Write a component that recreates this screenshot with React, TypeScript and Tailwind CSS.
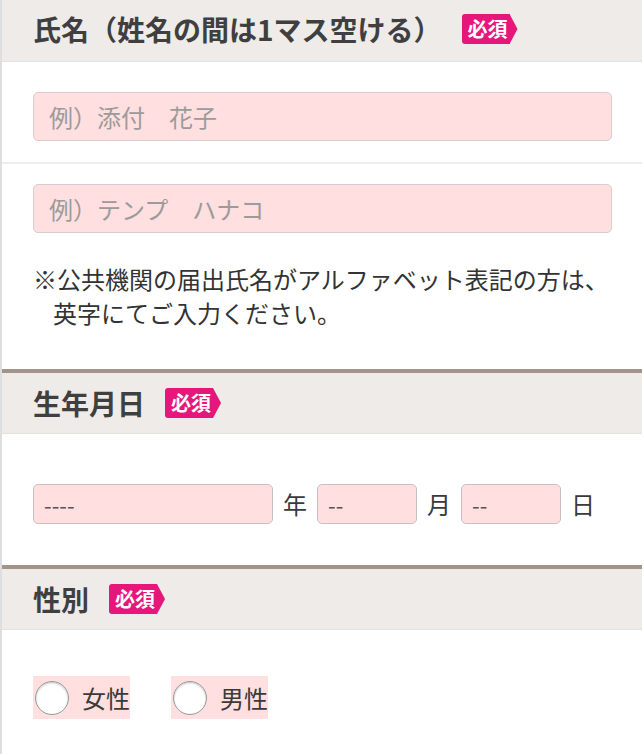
const font = { fontFamily: '"Noto Sans CJK JP", "Noto Sans", sans-serif' };

function Badge() {
  return (
    <span className="ml-[20px] flex items-center">
      <span className="flex h-[30px] items-center rounded-l-[3px] bg-[#e5177b] pl-[6px] pr-[2px] text-[20px] leading-none font-bold text-white">
        必須
      </span>
      <span className="h-[30px] w-[8px] bg-[#e5177b] [clip-path:polygon(0_0,100%_50%,0_100%)]" />
    </span>
  );
}

function Header({ title, first }: { title: string; first?: boolean }) {
  return (
    <div
      className={
        "flex items-center border-b border-[#e4e1de] bg-[#eeebe8] pl-[31px] " +
        (first ? "h-[62px] pb-[3px]" : "h-[65px] border-t-4 border-t-[#a39389]")
      }
    >
      <h2 className="text-[28px] leading-none font-bold text-[#3f3f3f]">{title}</h2>
      <Badge />
    </div>
  );
}

function TextInput({ placeholder }: { placeholder: string }) {
  return (
    <input
      type="text"
      placeholder={placeholder}
      className="h-[49px] w-[579px] rounded-[5px] border border-[#d9cccc] bg-[#ffdfe0] px-[15px] text-[24px] text-[#333] outline-none placeholder:text-[#9b9b9b]"
    />
  );
}

function SmallInput({ width, value }: { width: string; value: string }) {
  return (
    <div
      className={
        "flex h-[40px] shrink-0 items-center rounded-[5px] border border-[#c9c0c0] bg-[#ffdfe0] pl-[10px] text-[22px] text-[#555] " +
        width
      }
    >
      {value}
    </div>
  );
}

function Radio({ label }: { label: string }) {
  return (
    <label className="flex h-[43px] w-[97px] shrink-0 items-center bg-[#ffdfe0] pl-[2px] whitespace-nowrap">
      <span className="h-[34px] w-[34px] shrink-0 rounded-full border border-[#9a9a9a] bg-white shadow-[inset_0_1px_2px_rgba(0,0,0,0.25)]" />
      <span className="ml-[13px] text-[24px] leading-none text-[#3a3a3a]">{label}</span>
    </label>
  );
}

export default function App() {
  return (
    <div className="h-[754px] w-[644px] overflow-hidden bg-white" style={font}>
      <div className="h-full w-[642px] border-l-2 border-[#dedede]">
        {/* 氏名 */}
        <Header title="氏名（姓名の間は1マス空ける）" first />
        <div className="pt-[30px] pb-[21px] pl-[31px]">
          <TextInput placeholder="例）添付　花子" />
        </div>
        <div className="h-[2px] bg-[#eeeeee]" />
        <div className="pt-[20px] pb-[39px] pl-[31px]">
          <TextInput placeholder="例）テンプ　ハナコ" />
          <p className="mt-[29px] text-[24px] leading-[34px] text-[#333]">
            ※公共機関の届出氏名がアルファベット表記の方は、
          </p>
          <p className="pl-[20px] text-[24px] leading-[34px] text-[#333]">英字にてご入力ください。</p>
        </div>

        {/* 生年月日 */}
        <Header title="生年月日" />
        <div className="flex items-center gap-[10px] pt-[50px] pb-[41px] pl-[31px] text-[24px] text-[#3a3a3a]">
          <SmallInput width="w-[240px]" value="----" />
          <span>年</span>
          <SmallInput width="w-[100px]" value="--" />
          <span>月</span>
          <SmallInput width="w-[100px]" value="--" />
          <span>日</span>
        </div>

        {/* 性別 */}
        <Header title="性別" />
        <div className="flex gap-[41px] pt-[46px] pl-[31px]">
          <Radio label="女性" />
          <Radio label="男性" />
        </div>
      </div>
    </div>
  );
}
